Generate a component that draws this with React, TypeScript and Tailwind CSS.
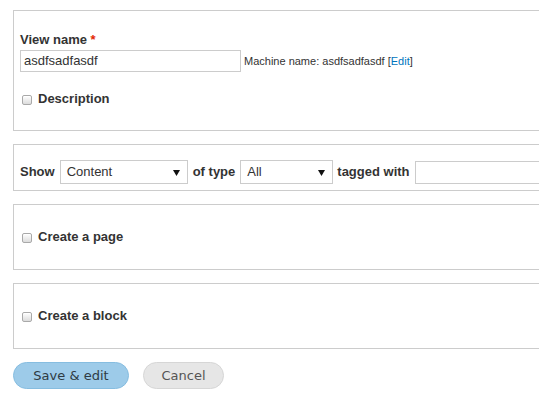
import type { ReactNode } from "react";

const sans = "font-['Liberation_Sans',Arial,sans-serif]";

function Box({ className, children }: { className: string; children: ReactNode }) {
  return (
    <div className={`w-[560px] border border-[#cccccc] bg-white pl-[6px] ${className}`}>
      {children}
    </div>
  );
}

function Checkbox() {
  return (
    <span className="mt-[1px] inline-block h-[10px] w-[10px] shrink-0 rounded-[2px] border border-[#a9a9a9] bg-gradient-to-b from-white to-[#dcdcdc] shadow-[inset_0_1px_0_#fff]" />
  );
}

function CheckRow({ label }: { label: string }) {
  return (
    <label className="flex items-center gap-[6px] pl-[2px] text-[13px] leading-[16px] font-bold text-[#333]">
      <Checkbox />
      {label}
    </label>
  );
}

function Select({ value, width }: { value: string; width: string }) {
  return (
    <div
      className={`flex h-[24px] shrink-0 items-center justify-between border border-[#cccccc] bg-white pl-[6px] pr-[7px] text-[13px] font-normal text-[#333] ${width}`}
    >
      <span>{value}</span>
      <svg width="7" height="6" viewBox="0 0 7 6" className="mt-[1px]">
        <path d="M0 0H7L3.5 6Z" fill="#111" />
      </svg>
    </div>
  );
}

export default function App() {
  return (
    <div className={`h-[420px] w-[539px] overflow-hidden bg-white pl-[13px] pt-[10px] ${sans}`}>
      {/* Name + description */}
      <Box className="pt-[21px] pb-[23px]">
        <div className="text-[13px] leading-[16px] font-bold text-[#333]">
          View name <span className="text-[#e32700]">*</span>
        </div>
        <div className="mt-[2px] flex items-center">
          <div className="flex h-[22px] w-[221px] items-center border border-[#cccccc] px-[3px] text-[13px] text-[#333]">
            asdfsadfasdf
          </div>
          <span className="ml-[3px] text-[11px] text-[#333]">
            Machine name: asdfsadfasdf [<span className="text-[#0074bd]">Edit</span>]
          </span>
        </div>
        <div className="mt-[19px]">
          <CheckRow label="Description" />
        </div>
      </Box>

      {/* Listing filters */}
      <Box className="mt-[13px] pt-[15px] pb-[6px]">
        <div className="flex items-center gap-[5px] whitespace-nowrap text-[13px] font-bold text-[#333]">
          <span className="shrink-0">Show</span>
          <Select value="Content" width="w-[128px]" />
          <span className="shrink-0">of type</span>
          <Select value="All" width="w-[93px]" />
          <span className="ml-[-1px] shrink-0">tagged with</span>
          <div className="h-[23px] w-[160px] shrink-0 border border-[#cccccc] bg-white" />
        </div>
      </Box>

      <Box className="mt-[13px] flex h-[66px] items-center">
        <CheckRow label="Create a page" />
      </Box>

      <Box className="mt-[13px] flex h-[66px] items-center">
        <CheckRow label="Create a block" />
      </Box>

      {/* Form actions */}
      <div className="mt-[13px] flex gap-[14px] font-['DejaVu_Sans',Verdana,sans-serif] text-[13px]">
        <button className="h-[27px] w-[116px] rounded-full border border-[#86bde0] bg-[#9dcbe9] text-[#2f3b44]">
          Save &amp; edit
        </button>
        <button className="h-[27px] w-[81px] rounded-full border border-[#d6d6d6] bg-[#e6e6e6] text-[#555]">
          Cancel
        </button>
      </div>
    </div>
  );
}
